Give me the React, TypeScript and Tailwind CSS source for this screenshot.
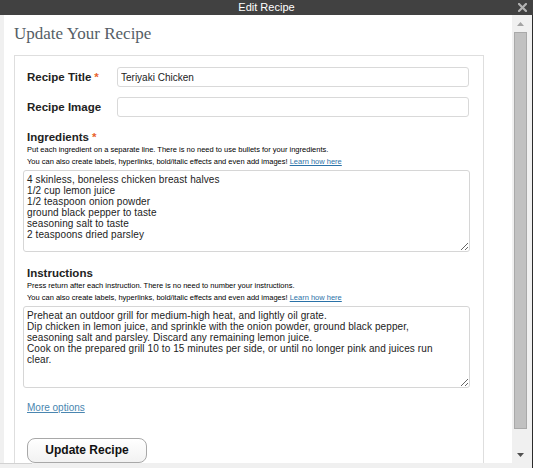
import React from 'react';

const ingredients = [
  '4 skinless, boneless chicken breast halves',
  '1/2 cup lemon juice',
  '1/2 teaspoon onion powder',
  'ground black pepper to taste',
  'seasoning salt to taste',
  '2 teaspoons dried parsley',
].join('\n');

const instructions = [
  'Preheat an outdoor grill for medium-high heat, and lightly oil grate.',
  'Dip chicken in lemon juice, and sprinkle with the onion powder, ground black pepper,',
  'seasoning salt and parsley. Discard any remaining lemon juice.',
  'Cook on the prepared grill 10 to 15 minutes per side, or until no longer pink and juices run',
  'clear.',
].join('\n');

const Label: React.FC<{ text: string; required?: boolean; className?: string }> = ({ text, required, className }) => (
  <div className={`pl-[4px] text-[11.5px] leading-[14px] font-bold text-[#222] ${className || ''}`}>
    {text}
    {required && <span className="text-[#e8622c] ml-[3px]">*</span>}
  </div>
);

const HelpText: React.FC<{ first: string }> = ({ first }) => (
  <div className="pl-[4px] text-[7.5px] leading-[12px] text-black">
    <div>{first}</div>
    <div>
      You can also create labels, hyperlinks, bold/italic effects and even add images!{' '}
      <a href="#" className="text-[#2a72a8] underline">Learn how here</a>
    </div>
  </div>
);

const App: React.FC = () => {
  return (
    <div className="w-[533px] h-[468px] flex flex-col bg-[#f0f0f0] overflow-hidden font-['Liberation_Sans',Arial,sans-serif]">
      {/* title bar */}
      <div className="relative h-[15px] bg-[#414141] flex items-center justify-center">
        <span className="text-white text-[11px] leading-[15px]">Edit Recipe</span>
        <button className="absolute right-[6px] top-[3px] w-[9px] h-[9px]">
          <svg width="9" height="9" viewBox="0 0 9 9">
            <path d="M1 1 L8 8 M8 1 L1 8" stroke="#b3b3b3" strokeWidth="2.2" strokeLinecap="square" />
          </svg>
        </button>
      </div>

      <div className="flex flex-1 min-h-0">
        <div className="flex-1 flex flex-col min-w-0">
          <div className="flex flex-1 min-h-0">
            <div className="w-[4px] bg-[#f0f0f0]" />
            <main className="flex-1 bg-white overflow-hidden pl-[10px] pt-[9px]">
              <h1 className="font-['Liberation_Serif',Georgia,serif] text-[17px] leading-[20px] text-[#555e66]">
                Update Your Recipe
              </h1>

              <div className="mt-[11px] w-[470px] border border-b-0 border-[#dedede] pl-[8px] pr-[13px] pt-[11px]">
                <div className="flex items-center h-[20px]">
                  <div className="w-[94px]">
                    <Label text="Recipe Title" required />
                  </div>
                  <input
                    type="text"
                    defaultValue="Teriyaki Chicken"
                    className="w-[352px] h-[20px] border border-[#d9d9d9] rounded-[3px] px-[3px] text-[10px] text-[#222] outline-none"
                  />
                </div>
                <div className="flex items-center h-[20px] mt-[10px]">
                  <div className="w-[94px]">
                    <Label text="Recipe Image" />
                  </div>
                  <input
                    type="text"
                    className="w-[352px] h-[20px] border border-[#d9d9d9] rounded-[3px] px-[3px] text-[10px] text-[#222] outline-none"
                  />
                </div>

                <Label text="Ingredients" required className="mt-[13px]" />
                <HelpText first="Put each ingredient on a separate line. There is no need to use bullets for your ingredients." />
                <textarea
                  wrap="off"
                  defaultValue={ingredients}
                  className="block mt-[2px] w-full h-[82px] border border-[#d6d6d6] rounded-[3px] p-[3px] text-[10px] leading-[11px] tracking-[0.1px] text-[#222] overflow-hidden resize outline-none"
                />

                <Label text="Instructions" className="mt-[14px]" />
                <HelpText first="Press return after each instruction. There is no need to number your instructions." />
                <textarea
                  wrap="off"
                  defaultValue={instructions}
                  className="block mt-[2px] w-full h-[82px] border border-[#d6d6d6] rounded-[3px] p-[3px] text-[10px] leading-[11px] tracking-[0.1px] text-[#222] overflow-hidden resize outline-none"
                />

                <div className="mt-[14px] pl-[4px] text-[10px] leading-[12px]">
                  <a href="#" className="text-[#4a86b0] underline">More options</a>
                </div>

                <div className="mt-[23px] pl-[4px]">
                  <button className="w-[120px] h-[25px] border border-[#a8a8a8] rounded-[8px] bg-gradient-to-b from-white to-[#f2f2f2] text-[12px] font-bold text-[#111]">
                    Update Recipe
                  </button>
                </div>
              </div>
            </main>
          </div>
          <div className="h-[5px] bg-[#f0f0f0] relative">
            <div className="w-[32px] h-[1px] bg-[#d2d2d2]" />
          </div>
        </div>

        {/* scrollbar */}
        <div className="w-[20px] bg-[#f0f0f0] flex flex-col">
          <div className="h-[17px] flex items-center pl-[5px]">
            <svg width="7" height="4" viewBox="0 0 7 4">
              <polygon points="0,4 3.5,0 7,4" fill="#a3a3a3" />
            </svg>
          </div>
          <div className="ml-[2px] w-[13px] h-[397px] bg-[#c1c1c1] border border-[#a9a9a9]" />
          <div className="flex-1" />
          <div className="h-[17px] flex items-center pl-[5px]">
            <svg width="7" height="4" viewBox="0 0 7 4">
              <polygon points="0,0 7,0 3.5,4" fill="#505050" />
            </svg>
          </div>
          <div className="h-[5px]" />
        </div>
        <div className="w-[1px] bg-[#2b2b2b]" />
      </div>
    </div>
  );
};

export default App;
